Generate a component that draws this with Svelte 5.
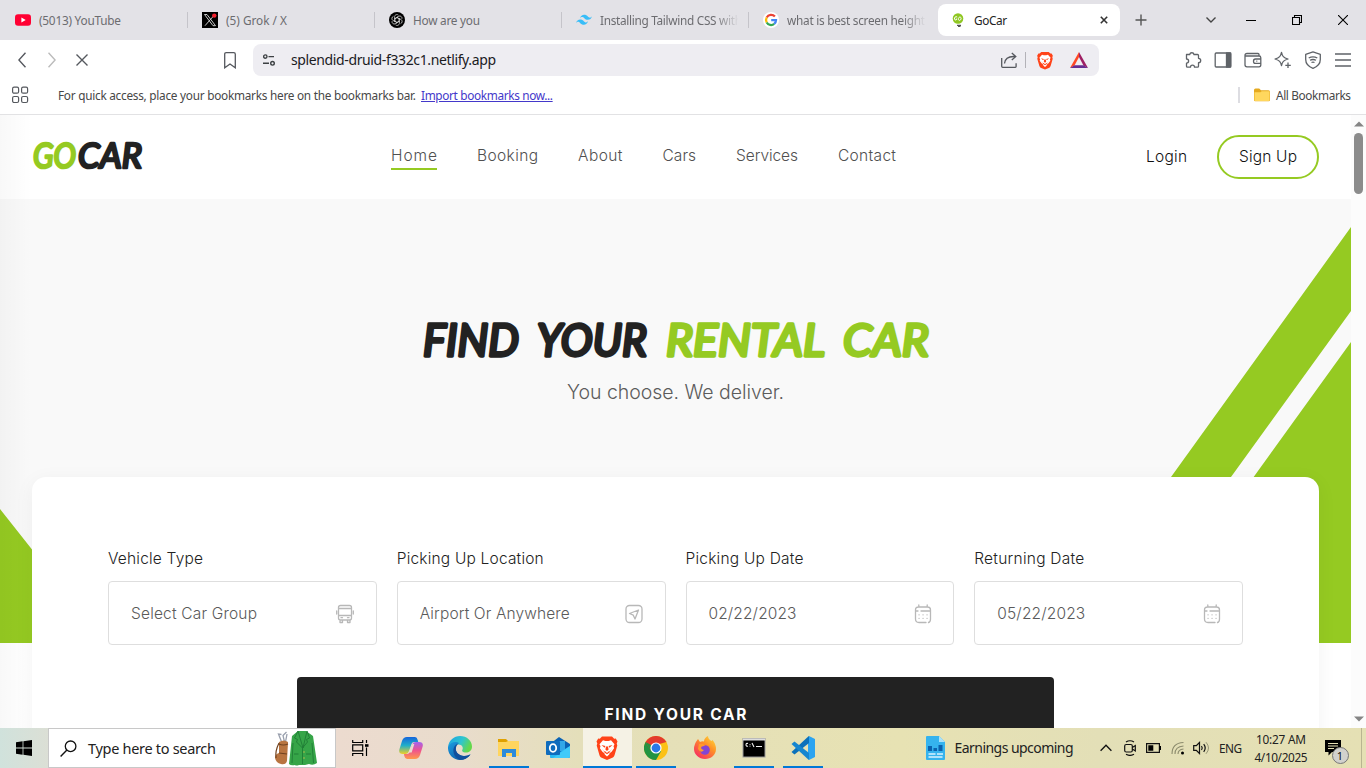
<script>
  // Tracks a line of text so that it fills exactly the given width.
  function fit(node, width) {
    const natural = node.getBoundingClientRect().width;
    const gaps = Math.max(1, node.textContent.length - 1);
    node.style.letterSpacing = (width - natural) / gaps + 'px';
    node.style.width = width + 'px';
  }

  const tabs = [
    { icon: 'youtube', title: '(5013) YouTube', w: 82 },
    { icon: 'x', title: '(5) Grok / X', w: 61 },
    { icon: 'gpt', title: 'How are you', w: 67 },
    { icon: 'tailwind', title: 'Installing Tailwind CSS with', w: 142, fade: true },
    { icon: 'google', title: 'what is best screen height', w: 138, fade: true }
  ];
  const nav = [
    ['Home', 46], ['Booking', 61], ['About', 44.5], ['Cars', 33.5], ['Services', 62], ['Contact', 58]
  ];
  const fields = [
    { label: 'Vehicle Type', lw: 95, value: 'Select Car Group', vw: 126, icon: 'bus' },
    { label: 'Picking Up Location', lw: 147, value: 'Airport Or Anywhere', vw: 150, icon: 'pin' },
    { label: 'Picking Up Date', lw: 118, value: '02/22/2023', vw: 88, icon: 'cal' },
    { label: 'Returning Date', lw: 110, value: '05/22/2023', vw: 88, icon: 'cal' }
  ];
  const apps = [
    { id: 'copilot' }, { id: 'edge' }, { id: 'files', open: true }, { id: 'outlook' },
    { id: 'brave', active: true }, { id: 'chrome', open: true }, { id: 'firefox' },
    { id: 'cmd', open: true }, { id: 'code', open: true }
  ];
</script>

{#snippet lion()}
  <path d="M7 .5h10l2.2 2.3 1.6-.3 1.7 3-.8 2 .6 2-2.7 9.600c-.3 1.100-.9 1.800-1.700 2.400L12 24l-5.900-2.500c-.9-.6-1.400-1.300-1.700-2.400L1.700 9.500l.6-2-.8-2 1.700-3 1.600.3z" fill="#ff4319" />
  <path d="M8 4.200l2.400.7h3.200l2.400-.7 3.500 4-1 2.100.6 2-2.500 3.400-2 1.500-.4 1.300L12 20.500l-2.200-2-.4-1.300-2-1.500-2.500-3.400.6-2-1-2.100z" fill="#fff" />
  <path d="M6.500 9l4 .9-1 1.800zM17.500 9l-4 .9 1 1.800zM11 10.500h2l.6 3-1.600 1.500-1.600-1.500zM7 12.500l2 2.800 1.500.3L12 17l1.500-1.400 1.500-.3 2-2.800-2.500 4-2.500 1.700-2.500-1.700z" fill="#ff4319" />
{/snippet}

<div class="screen">
  <div class="tabstrip">
    {#each tabs as t}
      <div class="tab">
        <svg width="16" height="16" viewBox="0 0 16 16">
          {#if t.icon === 'youtube'}
            <rect y="2.300" width="16" height="11.500" rx="3" fill="#ff0033" />
            <path d="M6.400 5.500v5l4.300-2.500z" fill="#fff" />
          {:else if t.icon === 'x'}
            <rect width="16" height="16" fill="#000" />
            <path d="M2.500 2.500h2.500l8.500 11.200H11zM11.500 4L3 13.700" fill="none" stroke="#ddd" stroke-width=".9" />
            <circle cx="12.300" cy="3.600" r="2.200" fill="#f4212e" />
          {:else if t.icon === 'gpt'}
            <circle cx="8" cy="8" r="8" fill="#000" />
            <g fill="none" stroke="#ddd" stroke-width=".7">
              {#each [0, 60, 120, 180, 240, 300] as a}
                <path d="M8 5.500l2.200 1.300v3.400M5.600 7V4.400a2.300 2.300 0 0 1 3.800-1.300" transform="rotate({a} 8 8)" />
              {/each}
            </g>
          {:else if t.icon === 'tailwind'}
            <path d="M4 6.400Q5 2.800 8.200 2.800c3.200 0 3.600 2.400 5.200 2.800Q15 6 16 4.200 15 7.800 11.800 7.800C8.600 7.800 8.200 5.400 6.600 5 5.400 4.700 4.700 5.200 4 6.400zM0 11.200Q1 7.600 4.200 7.600c3.200 0 3.600 2.400 5.200 2.800Q11 10.800 12 9 11 12.800 7.800 12.800C4.600 12.800 4.200 10.200 2.600 9.800 1.400 9.500.7 10 0 11.200z" fill="#38bdf8" />
          {:else}
            <circle cx="8" cy="8" r="8" fill="#fff" />
            <g fill="none" stroke-width="2.300">
              <path d="M11.900 4.600A5 5 0 0 0 3.700 5.500" stroke="#ea4335" />
              <path d="M3.700 5.500a5 5 0 0 0 0 5" stroke="#fbbc05" />
              <path d="M3.700 10.500a5 5 0 0 0 7.500 1.400" stroke="#34a853" />
              <path d="M11.200 11.900A5 5 0 0 0 13 8.200H8.200" stroke="#4285f4" />
            </g>
          {/if}
        </svg>
        <span class="tabtitle" class:fade={t.fade}><span class="t" use:fit={t.w}>{t.title}</span></span>
        <i class="sep"></i>
      </div>
    {/each}
    <div class="active-tab">
      <svg width="12" height="14" viewBox="0 0 12 14">
        <circle cx="6" cy="5.500" r="5.300" fill="#8fc722" />
        <path d="M5.200 4C3.500 3 2.300 4.500 2.500 6c.4 1.500 2 1.200 2.300 0H4M7.800 4c-2 .6-2 3.500-.2 3.400C9.400 7 9.700 4 7.800 4z" fill="none" stroke="#fff" stroke-width="1" />
        <path d="M5 12.300h4M6 13.500h2.500" stroke="#555" stroke-width="1.200" />
      </svg>
      <span class="t dark" use:fit={33}>GoCar</span>
      <svg class="close" width="8" height="8" viewBox="0 0 8 8"><path d="M.8.8l6.400 6.400M7.200.8L.8 7.200" stroke="#333" stroke-width="1.600" /></svg>
    </div>
    <svg class="plus" width="12" height="12" viewBox="0 0 12 12"><path d="M6 .5v11M.5 6h11" stroke="#555" stroke-width="1.400" /></svg>
    <div class="wincontrols">
      <svg class="chev" width="10" height="6" viewBox="0 0 10 6"><path d="M.5.500L5 5 9.500.5" fill="none" stroke="#444" stroke-width="1.400" /></svg>
      <svg width="10" height="10" viewBox="0 0 10 10"><path d="M0 5.500h10" stroke="#000" /></svg>
      <svg width="10" height="10" viewBox="0 0 10 10"><path d="M.5 2.500h7v7h-7zM2.500 2.500v-2h7v7h-2" fill="none" stroke="#000" stroke-width="1.100" /></svg>
      <svg width="10" height="10" viewBox="0 0 10 10"><path d="M0 0l10 10M10 0L0 10" stroke="#000" stroke-width="1.100" /></svg>
    </div>
  </div>

  <div class="toolbar">
    <div class="navicons">
      <svg width="8" height="16" viewBox="0 0 8 16"><path d="M7.500.8L.9 8l6.600 7.200" fill="none" stroke="#55585e" stroke-width="1.400" /></svg>
      <svg width="8" height="16" viewBox="0 0 8 16"><path d="M.5.800L7.100 8 .5 15.200" fill="none" stroke="#bbb" stroke-width="1.400" /></svg>
      <svg width="12" height="12" viewBox="0 0 12 12"><path d="M.5.500l11 11M11.500.500l-11 11" stroke="#55585e" stroke-width="1.400" /></svg>
    </div>
    <svg class="mark" width="12" height="17" viewBox="0 0 12 17"><path d="M2.200.700h7.600q1.500 0 1.500 1.500v13.600L6 12 .7 15.800V2.200Q.7.700 2.200.700z" fill="none" stroke="#55585e" stroke-width="1.300" /></svg>
    <div class="omnibox">
      <svg width="12" height="12" viewBox="0 0 12 12"><g fill="none" stroke="#3c4043" stroke-width="1.400"><circle cx="2.300" cy="2.600" r="1.700" /><path d="M5.500 2.600H11M0 9.300h6" /><circle cx="9.500" cy="9.300" r="1.800" /></g></svg>
      <span class="url" use:fit={205}>splendid-druid-f332c1.netlify.app</span>
      <svg class="share" width="16" height="16" viewBox="0 0 16 16"><path d="M.7 6v8.300q0 1 1 1h12.600q.8 0 .8-.8v-3.200M3.500 11.500C4 7 7 4.500 12.500 4.500h2.500M10.800.900l4 3.600-4 3.600" fill="none" stroke="#55585e" stroke-width="1.300" /></svg>
      <i class="divider"></i>
      <svg class="br" width="18" height="19" viewBox="0 0 24 24">{@render lion()}</svg>
      <svg width="18" height="16" viewBox="0 0 18 16"><path d="M9 0L0 16l4.500-2.600L9 5z" fill="#ff4724" /><path d="M9 0l9 16-4.500-2.600L9 5z" fill="#9e1f63" /><path d="M0 16h18l-4.500-2.800h-9z" fill="#662d91" /></svg>
    </div>
    <div class="tools">
      <svg width="18" height="18" viewBox="0 0 18 18"><path d="M2.500 3.500h3.200a2.200 2.200 0 0 1 4.300 0h3.500q1 0 1 1v2.800a2.200 2.200 0 0 1 0 4.400v3.500q0 1-1 1h-3a2 2 0 0 0-4 0h-3q-1 0-1-1v-3a2.100 2.100 0 0 0 0-4.200V4.500q0-1 0-1z" /></svg>
      <svg width="18" height="18" viewBox="0 0 18 18"><rect x="1.200" y="2" width="15.500" height="14" rx="1" /><path class="solid" d="M12.500 2h4.200v14h-4.200z" /></svg>
      <svg width="18" height="18" viewBox="0 0 18 18"><path d="M15 5V3.500q0-1-1-1H3q-2 0-2 2v9.300q0 2 2 2h12q1.800 0 1.800-2V6.800Q16.800 5 15 5H1.500M16.800 8h-5.300q-2 0-2 2.200t2 2.200h5.300M12.300 10.200h1" /></svg>
      <svg width="18" height="18" viewBox="0 0 18 18"><path d="M7.500 1.300c.8 4 2 5.400 6.500 6.700-4.500 1.300-5.700 2.700-6.500 6.700C6.700 10.700 5.500 9.300 1 8c4.500-1.300 5.700-2.700 6.500-6.700zM14 11.500v5.500M11.300 14.300h5.500" /></svg>
      <svg width="18" height="18" viewBox="0 0 18 18"><path d="M9 .9l7.300 2.500v5.100C16.300 13 13 15.800 9 17.300 5 15.800 1.700 13 1.700 8.500V3.400zM4.700 7q4.300-2.400 8.600 0M6 9.300q3-1.600 6 0M7.500 11.500q1.500-.8 3 0" /></svg>
      <svg width="18" height="18" viewBox="0 0 18 18"><path d="M1 3h16M1 9h16M1 15h16" /></svg>
    </div>
  </div>

  <div class="bookmarks">
    <svg width="18" height="18" viewBox="0 0 18 18"><g fill="none" stroke="#55585e" stroke-width="1.200"><rect x="1.600" y="1.200" width="6" height="6" rx="1.500" /><rect x="10.600" y="1.200" width="6" height="6" rx="1.500" /><rect x="1.600" y="10.500" width="6" height="6" rx="1.500" /><rect x="10.600" y="10.500" width="6" height="6" rx="1.500" /></g></svg>
    <span class="t hint" use:fit={358}>For quick access, place your bookmarks here on the bookmarks bar.</span>
    <span class="t link" use:fit={132}>Import bookmarks now...</span>
    <i class="bdiv"></i>
    <svg class="folder" width="16" height="14" viewBox="0 0 16 14"><path d="M0 2Q0 .5 1.500.500h3.700L7 2.300h7.500Q16 2.300 16 4v8q0 1.300-1.300 1.300H1.300Q0 13.300 0 12z" fill="#e5a91f" /><path d="M.5 4.300h6L7.700 3.200H15q.6 0 .6.800v8q0 .9-.9.900H1.300q-.8 0-.8-.9z" fill="#ffd75e" /></svg>
    <span class="t all" use:fit={75}>All Bookmarks</span>
  </div>

  <div class="viewport">
    <div class="page">
      <header>
        <svg class="logo" width="118" height="56" viewBox="0 0 118 56" role="img" aria-label="GoCar">
          <g class="brush" transform="translate(0 41)">
            <text x="1" y="0" textLength="43" lengthAdjust="spacingAndGlyphs" class="green">GO</text>
            <text x="46" y="0" textLength="64" lengthAdjust="spacingAndGlyphs">CAR</text>
          </g>
        </svg>
        <nav>
          {#each nav as [name, w], i}
            <a href="#{name}" class:on={i === 0}><span class="r" use:fit={w}>{name}</span></a>
          {/each}
        </nav>
        <div class="auth">
          <span class="r login" use:fit={41}>Login</span>
          <button class="signup"><span class="r" use:fit={58}>Sign Up</span></button>
        </div>
      </header>
      <section class="hero">
        <svg class="shapes" width="1351" height="444" viewBox="0 0 1351 444">
          <path d="M1351 28v84L1111 444H1006L1171 278zM1351 143V444H1134zM0 310l32 40.500V444H0z" fill="#95ca22" />
        </svg>
        <h1 aria-label="Find your rental car">
          <svg width="514" height="68" viewBox="0 0 514 68">
            <g class="brush big" transform="translate(2 49.500)">
              <text x="2" y="0" textLength="96" lengthAdjust="spacingAndGlyphs">FIND</text>
              <text x="116" y="0" textLength="110" lengthAdjust="spacingAndGlyphs">YOUR</text>
              <text x="245" y="0" textLength="159" lengthAdjust="spacingAndGlyphs" class="green">RENTAL</text>
              <text x="422" y="0" textLength="86" lengthAdjust="spacingAndGlyphs" class="green">CAR</text>
            </g>
          </svg>
        </h1>
        <p><span class="r" use:fit={217}>You choose. We deliver.</span></p>
      </section>
      <section class="card">
        <div class="fields">
          {#each fields as f}
            <div class="field">
              <div class="label"><span class="r" use:fit={f.lw}>{f.label}</span></div>
              <div class="input">
                <span class="r" use:fit={f.vw}>{f.value}</span>
                <svg width="20" height="20" viewBox="0 0 20 20">
                  {#if f.icon === 'bus'}
                    <path d="M5.500 1.500h9q2 0 2 2V14q0 2-2 2h-9q-2 0-2-2V3.500q0-2 2-2zM3.500 4.500h13M3.500 11.500h13M1.700 7v3M18.300 7v3M5 16v2.500h2.500V16M12.500 16v2.500H15V16M6 13.700h1.500M12.500 13.700H14" />
                  {:else if f.icon === 'pin'}
                    <rect x="2" y="1.500" width="16" height="17" rx="3.500" />
                    <path d="M14.500 6l-9 3.500 3.800 1.700 1.700 3.800z" />
                  {:else}
                    <path d="M13 18.500H6q-3.500 0-3.500-3.500V6q0-3 3-3h9q3 0 3 3v9q0 3-2 3.500M5.800 1v2M14.200 1v2M2.500 7H5M8 7h9.500" />
                    <path d="M6 10.800H15M6 14.300H15" stroke-dasharray=".1 3.900" stroke-width="1.500" />
                  {/if}
                </svg>
              </div>
            </div>
          {/each}
        </div>
        <button class="find"><span class="r" use:fit={142}>FIND YOUR CAR</span></button>
      </section>
      <div class="edge-shade"></div>
    </div>
    <div class="scrollbar">
      <svg width="10" height="6" viewBox="0 0 10 6"><path d="M0 5.500L5 .500l5 5z" fill="#858585" /></svg>
      <div class="thumb"></div>
      <svg class="down" width="10" height="6" viewBox="0 0 10 6"><path d="M0 .500L5 5.500l5-5z" fill="#858585" /></svg>
    </div>
  </div>

  <div class="taskbar">
    <div class="start"><svg width="16" height="16" viewBox="0 0 16 16"><path d="M0 2.200l6.600-.9v6.300H0zM7.400 1.200L16 0v7.600H7.400zM0 8.400h6.600v6.300L0 13.800zM7.400 8.400H16V16l-8.600-1.200z" /></svg></div>
    <div class="search">
      <svg width="17" height="17" viewBox="0 0 17 17"><circle cx="10.600" cy="6.300" r="5.300" fill="none" stroke="#111" stroke-width="1.300" /><path d="M6.900 10L.6 16.400" stroke="#111" stroke-width="1.400" /></svg>
      <span class="s15" use:fit={128}>Type here to search</span>
      <svg class="golf" width="44" height="36" viewBox="0 0 44 36">
        <path d="M8 13L4.500 4l3 .5M10.500 12L9 5.500l3.500-3.500M11.500 12l1.500-8" fill="none" stroke="#9aa0ae" stroke-width="1.300" />
        <path d="M5 12q5-3 9 0l-1 19q-1 4-6 3Q2 33 1 28q0-4 4-5z" fill="#b87440" /><path d="M5 14q4 2 9 0M5 23l8 1M5 13q-4 8-3 15" fill="none" stroke="#70421f" stroke-width="1.200" />
        <path d="M24 1h8l7 5 4 27q-4 3-8 1l-4 1h-6q-3 1-4 0-4 1-6-1L18 6z" fill="#36a548" />
        <path d="M24 1l5 17 4-17M28.500 18v16M24 1l-3.500 7 3 1.500-1 2.500 6 6 5-6-1-2.500 3-1.500L33 1M19 13l-1 20M38 13l1.500 20M20 24h4.500M32 24h5" fill="none" stroke="#1f7c35" stroke-width=".9" />
        <circle cx="30" cy="22" r=".7" fill="#d9c34d" /><circle cx="30" cy="28" r=".7" fill="#d9c34d" />
      </svg>
    </div>
    <div class="taskview"><svg width="17" height="16" viewBox="0 0 17 16"><path d="M.7 0v2.500h10V0M.7 16v-2.500h10V16M.7 4.800h10v6H.7zM14.500 0v3M14.500 7.500V16" fill="none" stroke="#000" stroke-width="1.200" /><path d="M13 4.200h3.500v2.600H13z" /></svg></div>
    <div class="apps">
      {#each apps as a}
        <div class="app" class:open={a.open} class:active={a.active}>
          <svg width="24" height="24" viewBox="0 0 24 24">
            {#if a.id === 'copilot'}
              <defs>
                <linearGradient id="c1" x2="0" y2="1"><stop stop-color="#1464dc" /><stop offset=".5" stop-color="#20afc8" /><stop offset="1" stop-color="#f0cf25" /></linearGradient>
                <linearGradient id="c2" x2="0" y2="1"><stop stop-color="#a461ee" /><stop offset=".5" stop-color="#ef548d" /><stop offset="1" stop-color="#ff984b" /></linearGradient>
              </defs>
              <path d="M8 1h8q2 0 2.700 3l.5 2h-4q-2 0-2.700 2L10 15q-1 3-3 3H4q-5 0-3.500-5l2.500-8Q4.300 1 8 1z" fill="url(#c1)" />
              <path d="M17 6h3q5 0 3.500 5L21 19q-1.300 4-5 4H8q-2 0-2.700-3L5 18h3q2 0 2.700-2l2.800-8q.8-2 3.500-2z" fill="url(#c2)" />
              <path d="M13.500 8h1.800l-2.600 8.500h-3z" fill="#eadccf" />
            {:else if a.id === 'edge'}
              <defs>
                <linearGradient id="e1" x2="1" y2=".4"><stop stop-color="#1ba1e4" /><stop offset=".6" stop-color="#2fc5cf" /><stop offset="1" stop-color="#64d84b" /></linearGradient>
                <linearGradient id="e2" x2="1" y2="1"><stop stop-color="#1b9de2" /><stop offset="1" stop-color="#0c4a95" /></linearGradient>
              </defs>
              <path d="M0 11C1 4 6 0 12 0c7 0 12 5 12 10.500 0 4-3 6-6 6-3.500 0-4.500-1.500-3.500-3 1-2-.5-5-4-5-4 0-8 1-10.500 2.500z" fill="url(#e1)" />
              <path d="M0 11c2-5 8-6 11-4-3 1-4 4-3 7.500 1 4 6 6.500 11 5 2-.5 3-1.200 3.500-1C20 22 16 24 12 24 5 24-.5 18 0 11z" fill="url(#e2)" />
              <path d="M8 14.500c-.5-3 .5-6 3-7-7 1-8 12 0 16 6 1 9-2 11.500-5C17 21.500 10 20 8 14.500z" fill="#114f9c" />
            {:else if a.id === 'files'}
              <path d="M1 3h8l2 2v3H1z" fill="#e0a100" /><path d="M1 6h8l2-1h11v15H1z" fill="#ffd55e" /><path d="M5 21v-8h14v8h-4v-4H9v4z" fill="#2d8bdb" />
            {:else if a.id === 'outlook'}
              <path d="M4 8l9-7 11 7v12q0 2-2 2H6q-2 0-2-2z" fill="#0a63b5" /><path d="M8 5h11v10H8z" fill="#32a7e8" /><path d="M4 12l10 4 10-6v11q0 1-2 1H6q-2 0-2-1z" fill="#28b9f4" /><path d="M24 10L7 22h15q2 0 2-2z" fill="#49d2fb" opacity=".7" />
              <rect y="5" width="14" height="14" rx="1" fill="#0f6cbd" /><ellipse cx="7" cy="12" rx="3.200" ry="3.800" fill="none" stroke="#fff" stroke-width="1.800" />
            {:else if a.id === 'brave'}
              {@render lion()}
            {:else if a.id === 'chrome'}
              <circle cx="12" cy="12" r="12" fill="#fbc116" /><path d="M12 12L1.600 6A12 12 0 0 1 22.400 6H12z" fill="#e33b2e" /><path d="M1.600 6A12 12 0 0 0 12 24l5.200-9H12z" fill="#229342" /><path d="M1.600 6l5.200 9L12 9l10.400-3H12z" fill="#e33b2e" /><path d="M1.600 6l5.200 9 4-4z" fill="#229342" /><circle cx="12" cy="12" r="5.600" fill="#fff" /><circle cx="12" cy="12" r="4.400" fill="#2979e8" />
            {:else if a.id === 'firefox'}
              <defs><linearGradient id="f1" x1="1" x2=".2" y2="1"><stop stop-color="#ffe640" /><stop offset=".45" stop-color="#ff9026" /><stop offset="1" stop-color="#f62a64" /></linearGradient></defs>
              <path d="M5 3l2 3q2-1 4-.5Q11 2 15 0q0 3 3.500 5l1-1Q23 8 23 13c0 6-5 10-11 10S1 18.500 1 13q0-5 4-10z" fill="url(#f1)" /><circle cx="12" cy="14" r="4.800" fill="#8245d4" /><path d="M6 8q4-1 6 1.500-2 1-3.500 1Q7 13 11 14q-3 4-6-1z" fill="#ff9a2d" />
            {:else if a.id === 'cmd'}
              <rect x="1" y="2.500" width="22" height="18.500" fill="#000" stroke="#999" /><path d="M1 2.500h22v2H1z" fill="#ddd" /><path d="M6 7.500q-2-.6-2 1.300t2 1.300M8 8v.8M8 9.800v.7M10 7l2 4M14 10.500H20" fill="none" stroke="#eee" stroke-width="1.100" />
            {:else}
              <path d="M18 0l6 3v18l-6 3-1-3V3z" fill="#2ba4f1" /><path d="M18 0v7L3.500 18.500.5 16 17 .800z" fill="#0b71bb" /><path d="M18 24v-7L3.500 5.500.5 8 17 23.200z" fill="#1686d0" />
            {/if}
          </svg>
        </div>
      {/each}
    </div>
    <div class="news">
      <svg width="20" height="24" viewBox="0 0 20 24"><path d="M0 1q0-1 1-1h12l6 6v17q0 1-1 1H1q-1 0-1-1z" fill="#35b3ee" /><path d="M13 0l6 6h-6z" fill="#a9e1fb" /><path d="M2 10h4v5H2zM7.500 12H11v3H7.500zM12.500 9h4v6h-4z" fill="#0b62ae" /><path d="M2.500 18h7M11 18h6M2.500 21h14" stroke="#d9f4ff" stroke-width="1.500" /></svg>
      <span class="s14" use:fit={119}>Earnings upcoming</span>
    </div>
    <div class="tray">
      <svg width="12" height="8" viewBox="0 0 12 8"><path d="M.6 6.800L6 1.200l5.400 5.600" fill="none" stroke="#111" stroke-width="1.300" /></svg>
      <svg width="12" height="16" viewBox="0 0 12 16"><g fill="none" stroke="#111" stroke-width="1.200"><rect x=".7" y="4.500" width="7.600" height="7.500" rx="1.500" /><path d="M8.300 7.500L11.300 5.500v5.500L8.300 9M2 2q4-2.500 8 0M2 14.200q4 2.500 8 0" /></g></svg>
      <svg width="16" height="10" viewBox="0 0 16 10"><path d="M.600.600h12.800v8.800H.6z" fill="none" stroke="#111" stroke-width="1.200" /><path d="M2.300 2.300h5v5.400h-5zM13.500 3H15v4h-1.500z" /></svg>
      <svg width="14" height="14" viewBox="0 0 14 14"><g fill="none" stroke="#8b8a6c" stroke-width="1.100"><path d="M1 13Q1 2 12.500 1.500M4 13q0-7.500 8.500-8M7 13q0-4.500 5.500-5" /></g><circle cx="11.500" cy="12" r="1.500" /></svg>
      <svg width="17" height="14" viewBox="0 0 17 14"><path d="M.7 4.700h2.600L6.500 1.500v11L3.300 9.300H.7z" fill="none" stroke="#111" stroke-width="1.200" /><path d="M8.500 5q1.500 2 0 4M10.700 3.200q3 3.800 0 7.600" fill="none" stroke="#111" stroke-width="1.200" /><path d="M13 1.200q5 5.800 0 11.600" fill="none" stroke="#999878" /></svg>
      <span class="t dark" use:fit={23}>ENG</span>
      <div class="clock"><span class="t dark" use:fit={50}>10:27 AM</span><span class="t dark" use:fit={53}>4/10/2025</span></div>
      <div class="notify">
        <svg width="16" height="16" viewBox="0 0 16 16"><path d="M0 0h16v12H7l-3.500 3.500V12H0z" /><path d="M3 3.500h10M3 6h10M3 8.500h6" stroke="#e4dfb4" /></svg>
        <b>1</b>
      </div>
    </div>
    <i class="peek"></i>
  </div>
</div>

<style>
  :global(body) { margin: 0; overflow: hidden; }
  .screen { width: 1366px; height: 768px; display: flex; flex-direction: column; background: #fff; font-family: 'Noto Sans', 'Open Sans', sans-serif; overflow: hidden; }
  svg { display: block; flex: none; }
  i { flex: none; }
  .t, .url, .s15, .s14, .r { display: inline-block; white-space: nowrap; flex: none; }
  .t { font-size: 11.800px; line-height: 16px; color: #6c6c70; }
  .dark { color: #222; }

  .tabstrip { height: 40px; flex: none; display: flex; align-items: center; background: #e3e2e7; }
  .tab { width: 187px; height: 40px; flex: none; display: flex; align-items: center; padding-left: 15px; box-sizing: border-box; }
  .tabtitle { width: 140px; margin-left: 8px; overflow: hidden; display: flex; }
  .fade { mask-image: linear-gradient(90deg, #000 115px, transparent 139px); }
  .sep { width: 1px; height: 16px; margin-left: 9px; background: #c5c4ca; transform: translateX(1px); }
  .tab:nth-child(5) .sep { visibility: hidden; }
  .active-tab { width: 182px; height: 32px; margin-left: 3px; border-radius: 8px; background: #fff; display: flex; align-items: center; box-sizing: border-box; padding: 0 12px 0 14px; flex: none; }
  .active-tab .t { margin-left: 10px; }
  .close { margin-left: auto; }
  .plus { margin-left: 15px; }
  .wincontrols { margin-left: auto; display: flex; align-items: center; gap: 36px; padding-right: 18px; }
  .chev { margin-right: -6px; }

  .toolbar { height: 40px; flex: none; display: flex; align-items: center; }
  .navicons { width: 224px; display: flex; align-items: center; padding-left: 18px; box-sizing: border-box; gap: 22px; }
  .navicons svg:last-child { margin-left: -2px; }
  .omnibox { width: 846px; height: 32px; margin-left: 17px; border-radius: 8px; background: #eeedf2; box-sizing: border-box; padding: 0 11px 0 10px; display: flex; align-items: center; flex: none; }
  .url { margin-left: 16px; font-size: 14px; line-height: 20px; color: #1b1b1f; }
  .share { margin-left: auto; }
  .divider { width: 1px; height: 16px; margin: 0 10px 0 8px; background: #b3b2b8; }
  .br { margin-right: 16px; }
  .tools { margin-left: 85px; display: flex; gap: 12px; }
  .tools path, .tools rect { stroke: #5f6368; stroke-width: 1.300; fill: none; stroke-linejoin: round; }
  .tools .solid { fill: #5f6368; }

  .bookmarks { height: 35px; box-sizing: border-box; flex: none; display: flex; align-items: center; padding: 0 15px 4px 11px; border-bottom: 1px solid #e2e2e4; }
  .bookmarks .t { color: #474747; }
  .hint { margin-left: 29px; }
  .bookmarks .link { margin-left: 5px; color: #4338ca; text-decoration: underline; }
  .bdiv { width: 2px; height: 16px; margin-left: auto; background: #dddde2; }
  .folder { margin: 0 6px 0 14px; }

  .viewport { height: 613px; flex: none; display: flex; }
  .page { width: 1351px; position: relative; overflow: hidden; font-family: Inter, Lato, sans-serif; }
  .r { font-size: 15.500px; line-height: 20px; font-weight: 300; color: #505050; }
  header { height: 84px; display: flex; align-items: flex-start; background: #fff; padding: 0 32px; }
  .logo { margin-top: 11.500px; width: 118px; }
  .brush text { font-family: Lato, sans-serif; font-weight: 400; font-style: italic; font-size: 34px; fill: #222; stroke: #222; stroke-width: 2.600; stroke-linejoin: round; }
  .brush.big text { font-size: 44px; stroke-width: 3.300; }
  .brush text.green { fill: #95ca22; stroke: #95ca22; }
  nav { display: flex; gap: 40px; margin-left: 241px; margin-top: 30px; }
  nav a { text-decoration: none; height: 23px; border-bottom: 2px solid transparent; }
  nav a.on { border-color: #95ca22; }
  .auth { margin-left: auto; margin-top: 20px; display: flex; align-items: center; gap: 30px; }
  .auth .r { color: #111; }
  .signup { width: 102px; height: 44px; padding: 0; border: 2px solid #95ca22; border-radius: 22px; background: #fff; font-family: inherit; }
  .hero { height: 444px; background: #f9f9f9; position: relative; text-align: center; }
  .shapes { position: absolute; left: 0; top: 0; }
  h1 { margin: 0; padding-top: 107px; display: flex; justify-content: center; position: relative; }
  .hero p { margin: 6px 0 0; position: relative; }
  .hero .r { font-size: 19.500px; line-height: 24px; color: #5c5c5c; }
  .card { position: relative; margin: -166px 32px 0; height: 300px; padding: 71px 76px 0; box-sizing: border-box; background: #fff; border-radius: 14px; box-shadow: 0 4px 20px rgba(0, 0, 0, .05); }
  .fields { display: grid; grid-template-columns: repeat(4, 1fr); gap: 20px; }
  .label { height: 33px; }
  .label .r { color: #222; }
  .input { height: 64px; box-sizing: border-box; border: 1px solid #dedede; border-radius: 4px; display: flex; align-items: center; justify-content: space-between; padding: 1px 20.500px 0 22px; }
  .input .r { color: #5a5a5a; }
  .input path, .input rect { fill: none; stroke: #b8b8b8; stroke-width: 1.300; stroke-linecap: round; stroke-linejoin: round; }
  .find { display: block; width: 757px; height: 74px; margin: 32px auto 0; padding: 2px 0 0; border: 0; border-radius: 4px; background: #222; font-family: inherit; }
  .find .r { color: #fff; font-weight: 700; font-size: 15.500px; }
  .edge-shade { position: absolute; left: 0; top: 0; width: 32px; height: 613px; background: linear-gradient(90deg, rgba(0, 0, 0, .028), transparent); }
  .scrollbar { width: 15px; background: #fcfcfc; display: flex; flex-direction: column; align-items: center; padding: 6px 0; box-sizing: border-box; }
  .thumb { width: 9px; height: 61px; margin-top: 6px; border-radius: 5px; background: #8b8b8b; }
  .down { margin-top: auto; }

  .taskbar { height: 40px; flex: none; display: flex; align-items: stretch; background: linear-gradient(90deg, #d0e2dc 0, #dcdfd5 50px, #ecdbcf 340px, #e9dccc 460px, #e4dfba 580px, #e7e2b3 900px, #e3dfb7 1100px, #e5e0b4 1366px); }
  .start, .taskview { width: 48px; display: flex; align-items: center; justify-content: center; }
  .search { width: 288px; box-sizing: border-box; border: 1px solid #c8c8c8; background: #fff; display: flex; align-items: center; padding-left: 11px; }
  .s15 { font-size: 14.500px; line-height: 20px; color: #222; margin-left: 11px; }
  .golf { margin-left: 58px; }
  .apps { display: flex; padding-left: 2.500px; }
  .app { width: 49px; display: flex; justify-content: center; align-items: center; position: relative; }
  .active { background: #f5f2e5; }
  .open::after, .active::after { content: ''; position: absolute; bottom: 0; left: 4.500px; width: 40px; height: 2px; background: #0078d7; }
  .active::after { left: 0; width: 49px; }
  .news { display: flex; align-items: center; margin-left: 98px; gap: 9px; }
  .s14 { font-size: 14px; line-height: 20px; color: #222; }
  .tray { margin-left: auto; display: grid; grid-template-columns: 23px 25px 24px 24px 22px 37px 64px 43px; align-items: center; justify-items: center; padding-right: 5px; }
  .clock { display: flex; flex-direction: column; align-items: center; gap: 2px; }
  .notify { position: relative; width: 16px; height: 16px; margin-right: 4px; }
  .notify b { position: absolute; left: 7px; top: 7px; width: 15px; height: 15px; border: 1px solid #777; border-radius: 50%; background: #d2d1cd; font-size: 11px; line-height: 15px; font-weight: 400; text-align: center; color: #111; }
  .peek { width: 1px; margin-right: 4px; background: #b9b591; }
</style>
